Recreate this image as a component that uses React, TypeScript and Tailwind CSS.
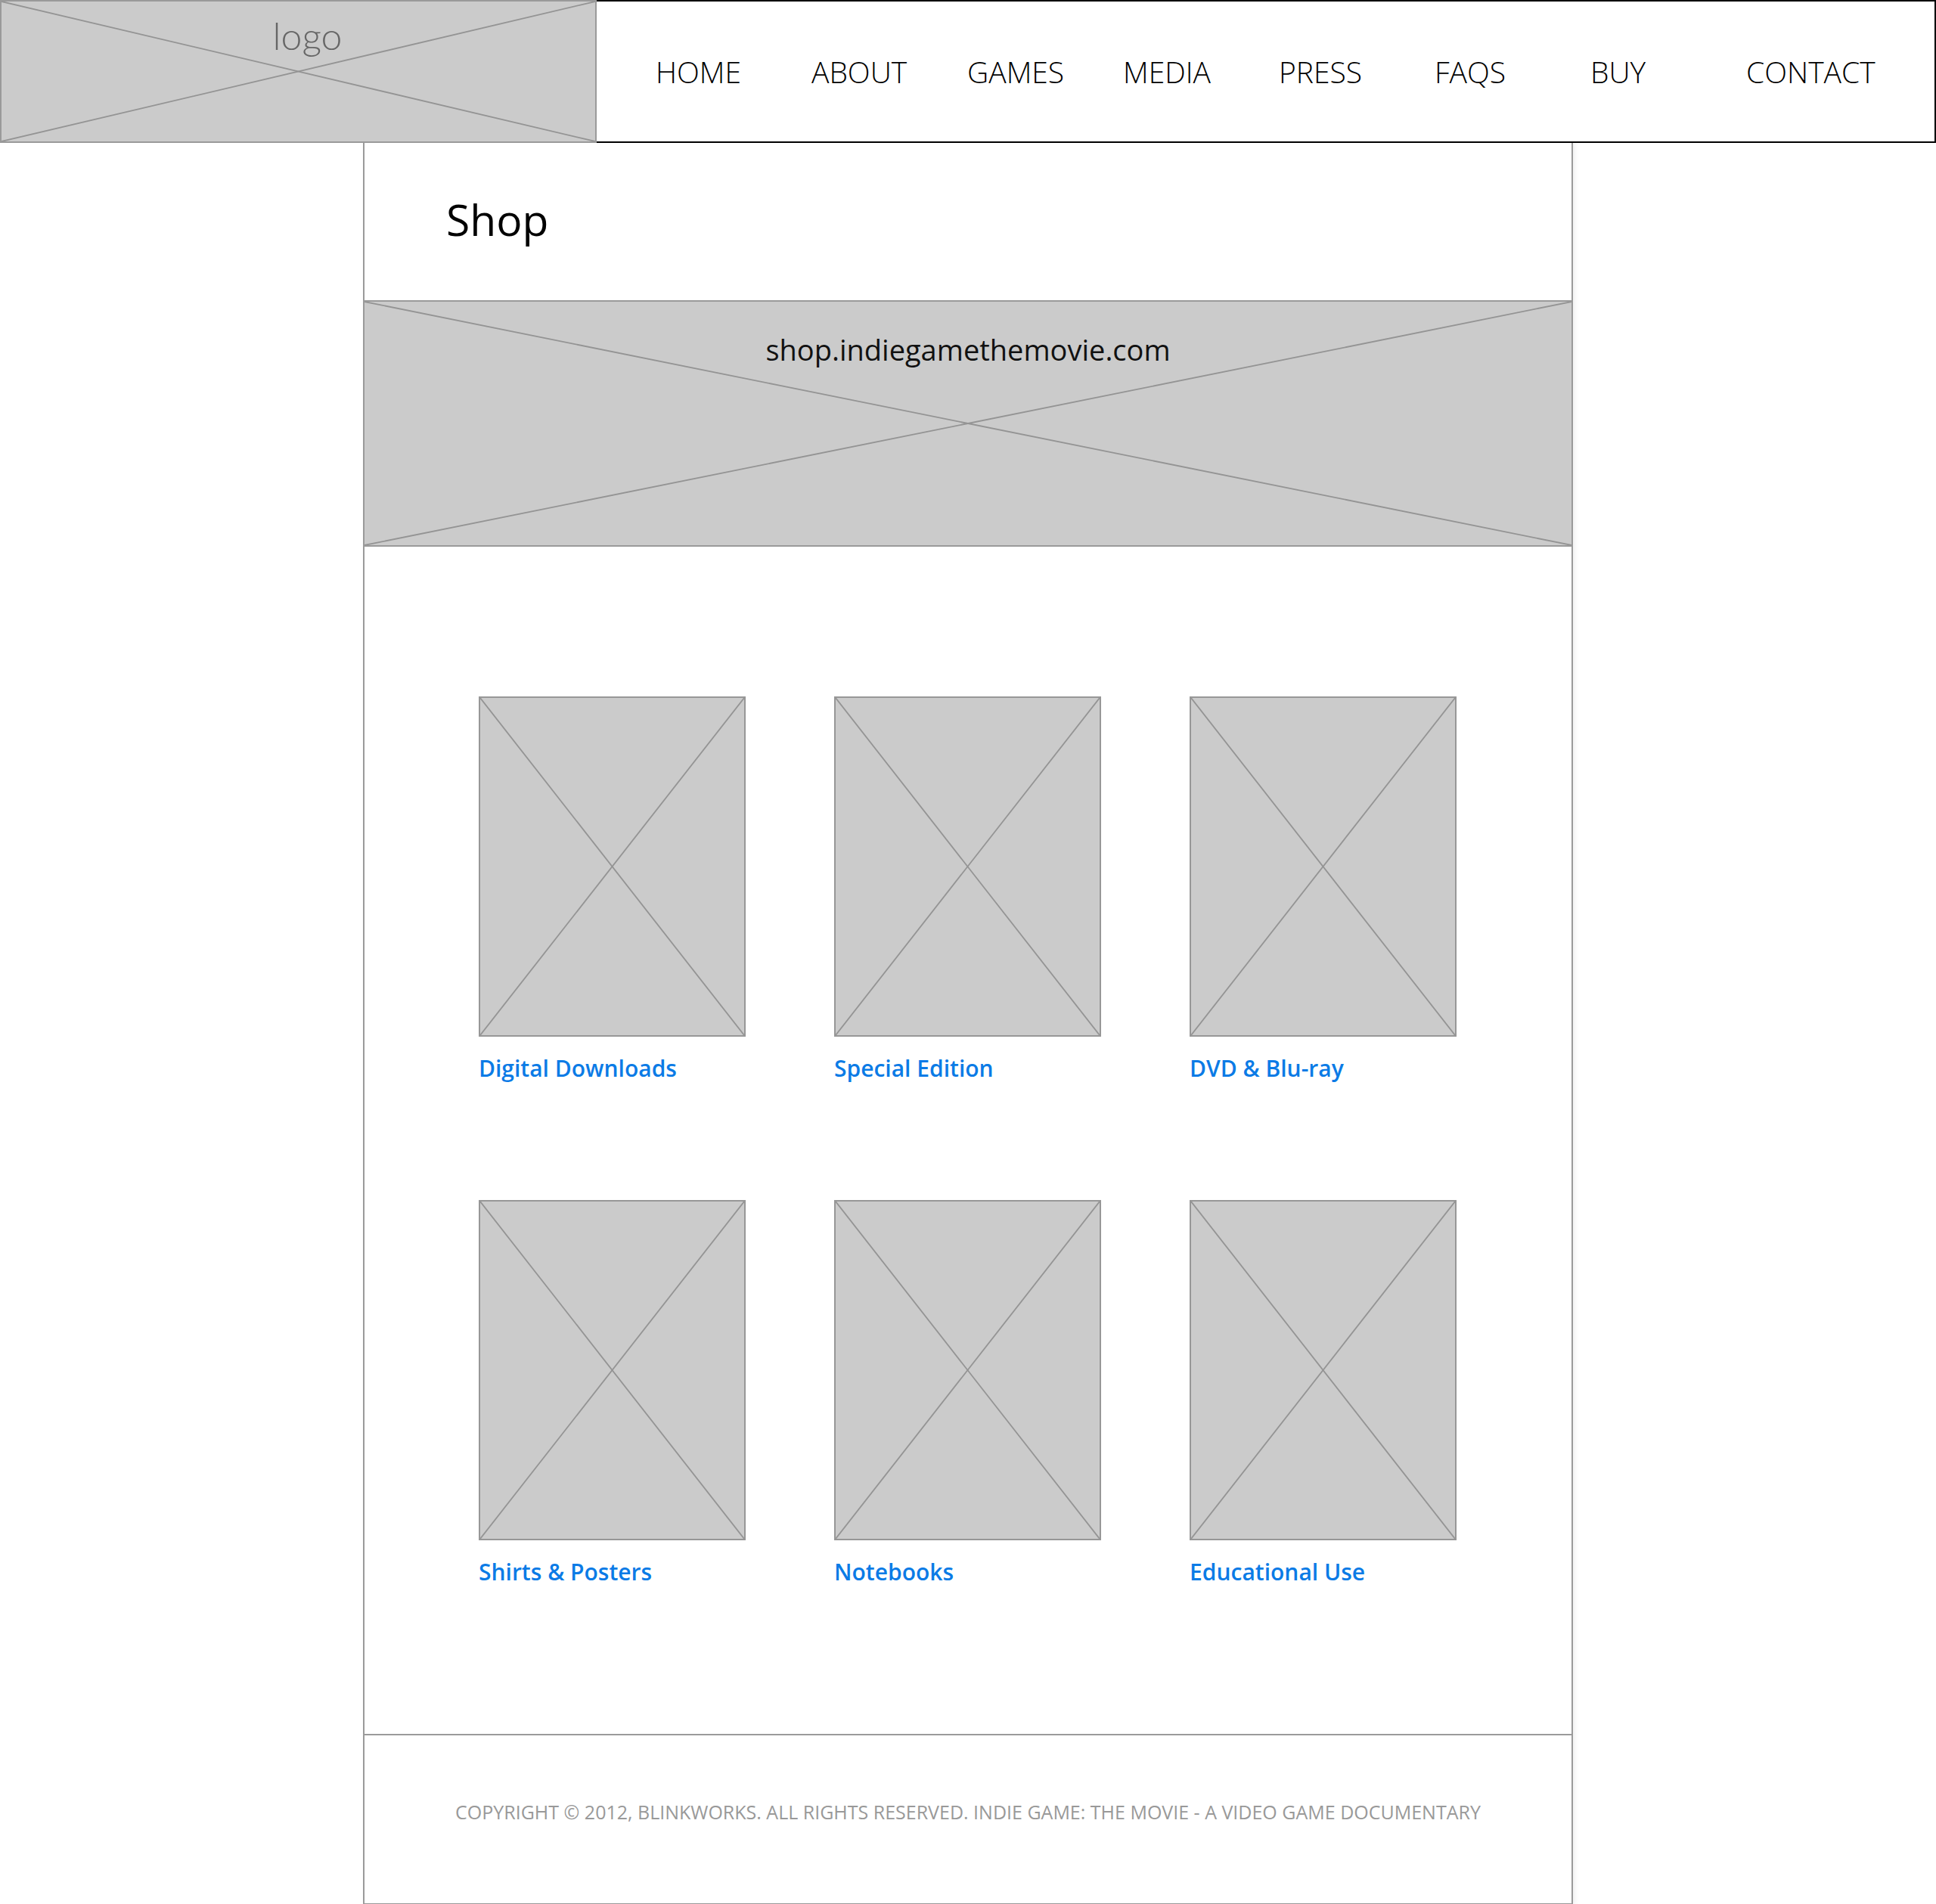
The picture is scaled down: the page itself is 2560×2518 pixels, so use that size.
import React from 'react'

const navItems = ['HOME', 'ABOUT', 'GAMES', 'MEDIA', 'PRESS', 'FAQS', 'BUY', 'CONTACT']

const products = [
  'Digital Downloads',
  'Special Edition',
  'DVD & Blu-ray',
  'Shirts & Posters',
  'Notebooks',
  'Educational Use',
]

// grey placeholder cross, stretched over the box it sits in
function Cross() {
  return (
    <svg
      className="absolute inset-0 h-full w-full"
      viewBox="0 0 100 100"
      preserveAspectRatio="none"
    >
      <line x1="0" y1="0" x2="100" y2="100" stroke="#949494" strokeWidth="1.8" vectorEffect="non-scaling-stroke" />
      <line x1="100" y1="0" x2="0" y2="100" stroke="#949494" strokeWidth="1.8" vectorEffect="non-scaling-stroke" />
    </svg>
  )
}

function Header() {
  return (
    <header className="flex h-[189px] w-full">
      <div className="relative flex w-[789px] shrink-0 justify-center border-2 border-[#9a9a9a] bg-[#cbcbcb]">
        <Cross />
        <span className="relative pt-[20px] pl-[24px] font-['Lato',sans-serif] text-[50px] font-light leading-none text-[#666666]">
          logo
        </span>
      </div>
      <nav className="flex flex-1 items-center border-2 border-l-0 border-black bg-white pl-[78px] font-['Open_Sans',sans-serif]">
        {navItems.map((item) => (
          <a key={item} href="#" className="w-[206px] shrink-0 text-[39px] font-light leading-none text-black">
            {item}
          </a>
        ))}
      </nav>
    </header>
  )
}

function ProductCard({ title }: { title: string }) {
  return (
    <div className="flex w-[353px] flex-col">
      <div className="relative h-[450px] w-full border-2 border-[#979797] bg-[#cbcbcb]">
        <Cross />
      </div>
      <a href="#" className="mt-[22px] text-[30px] font-semibold leading-[40px] text-[#0b7be6]">
        {title}
      </a>
    </div>
  )
}

export default function App() {
  return (
    <div className="min-h-screen bg-white font-['Open_Sans',sans-serif]">
      <Header />
      <main className="mx-auto flex w-[1600px] flex-col border-x-2 border-b-2 border-[#9a9a9a] bg-white shadow-[3px_0_6px_rgba(0,0,0,0.06)]">
        <div className="flex h-[208px] items-center pl-[108px] pb-[6px]">
          <h1 className="text-[57px] font-medium leading-none text-black">Shop</h1>
        </div>

        <div className="relative flex h-[326px] justify-center border-y-2 border-[#9a9a9a] bg-[#cbcbcb]">
          <Cross />
          <span className="relative pt-[44px] text-[38px] leading-none text-[#111111]">
            shop.indiegamethemovie.com
          </span>
        </div>

        <div className="grid grid-cols-[353px_353px_353px] gap-x-[117px] gap-y-[154px] pl-[151px] pt-[198px] pb-[194px]">
          {products.map((p) => (
            <ProductCard key={p} title={p} />
          ))}
        </div>

        <footer className="flex h-[224px] items-center justify-center border-t-2 border-[#9a9a9a] pb-[20px]">
          <p className="text-[25px] leading-none text-[#999999]">
            COPYRIGHT © 2012, BLINKWORKS. ALL RIGHTS RESERVED. INDIE GAME: THE MOVIE - A VIDEO GAME DOCUMENTARY
          </p>
        </footer>
      </main>
    </div>
  )
}
